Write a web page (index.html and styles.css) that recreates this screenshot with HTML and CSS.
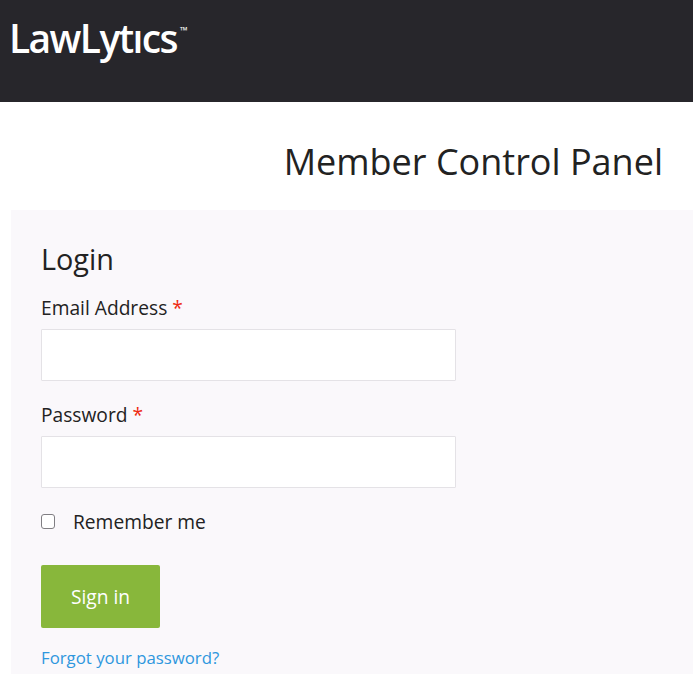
FILE: index.html
```html
<!DOCTYPE html>
<html lang="en">
<head>
<meta charset="utf-8">
<title>Member Control Panel</title>
<link rel="stylesheet" href="styles.css">
</head>
<body>
<header class="topbar">
  <div class="logo"><span class="logo-text">LawLyt<span class="logo-i">i</span>cs</span><span class="logo-tm">™</span></div>
</header>
<main class="page">
  <h1 class="page-title">Member Control Panel</h1>
  <section class="panel">
    <h2 class="panel-title">Login</h2>
    <form class="form">
      <label class="field-label">Email Address <span class="req">*</span></label>
      <input class="input" type="text">
      <label class="field-label second">Password <span class="req">*</span></label>
      <input class="input" type="password">
      <label class="check-row"><input class="check" type="checkbox"><span>Remember me</span></label>
      <button class="btn" type="button">Sign in</button>
      <a class="forgot" href="#">Forgot your password?</a>
    </form>
  </section>
</main>
</body>
</html>
```
FILE: styles.css
```css
* { box-sizing: border-box; }
html, body { margin: 0; height: 674px; overflow: hidden; }
body { font-family: "Open Sans", sans-serif; color: #222; background: #fff; }
.topbar { height: 102px; background: #27262b; padding: 14px 0 0 9px; }
.logo { display: flex; align-items: flex-start; color: #fff; }
.logo-text { font-family: "Open Sans", sans-serif; font-weight: 600; font-size: 39px; line-height: 48px; letter-spacing: -1.6px; }
.logo-i { display: inline-block; clip-path: inset(30% 0 0 0); }
.logo-tm { font-size: 10px; line-height: 12px; margin: 10px 0 0 3px; }
.page { padding-left: 11px; }
.page-title { margin: 0; padding: 37px 30px 0 0; height: 108px; text-align: right; font-weight: 400; font-size: 36px; line-height: 46px; color: #222; }
.panel { background: #faf8fb; padding: 29px 0 0 30px; height: 464px; }
.panel-title { margin: 0; font-weight: 400; font-size: 28.8px; line-height: 40px; color: #222; }
.form { display: flex; flex-direction: column; align-items: flex-start; }
.field-label { font-size: 19.2px; line-height: 28px; margin-top: 15px; color: #222; }
.field-label.second { margin-top: 20px; }
.req { color: #ee2a10; }
.input { width: 415px; height: 52px; margin-top: 7px; border: 1px solid #e4e2e6; background: #fff; border-radius: 1px; }
.check-row { display: flex; align-items: center; gap: 18px; font-size: 19.2px; line-height: 28px; margin-top: 20px; }
.check { appearance: none; width: 14px; height: 15px; margin: 0 0 1px; background: #fff; border: 1px solid #807e83; border-radius: 3px; }
.btn { margin-top: 29px; width: 119px; height: 63px; border: 0; border-radius: 2px; background: #88b73b; color: #fff; font: 400 19.2px "Open Sans", sans-serif; }
.forgot { margin-top: 19px; font-size: 16.8px; line-height: 22px; color: #2e97de; text-decoration: none; }
```
